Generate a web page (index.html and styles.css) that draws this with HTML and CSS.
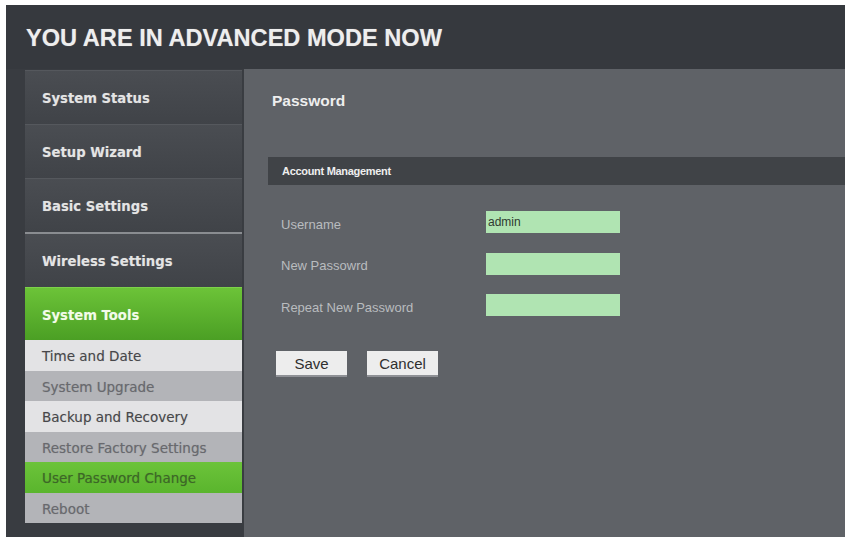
FILE: index.html
```html
<!DOCTYPE html>
<html lang="en">
<head>
    <meta charset="UTF-8">
    <title>Advanced Mode - Password</title>
    <link rel="stylesheet" href="styles.css">
</head>
<body>
    <div class="frame">
        <div class="header">
            <h1>YOU ARE IN ADVANCED MODE NOW</h1>
        </div>
        <div class="main">
            <div class="sidebar">
                <div class="nav-item">System Status</div>
                <div class="nav-item">Setup Wizard</div>
                <div class="nav-item">Basic Settings</div>
                <div class="nav-item wireless">Wireless Settings</div>
                <div class="nav-item active">System Tools</div>
                <div class="sub-item light">Time and Date</div>
                <div class="sub-item grey">System Upgrade</div>
                <div class="sub-item light">Backup and Recovery</div>
                <div class="sub-item grey">Restore Factory Settings</div>
                <div class="sub-item current">User Password Change</div>
                <div class="sub-item grey">Reboot</div>
            </div>
            <div class="content">
                <h2>Password</h2>
                <div class="section-bar">Account Management</div>
                <form class="pw-form">
                    <div class="row">
                        <label for="username">Username</label>
                        <input type="text" id="username" value="admin">
                    </div>
                    <div class="row">
                        <label for="new-pw">New Passowrd</label>
                        <input type="password" id="new-pw">
                    </div>
                    <div class="row">
                        <label for="repeat-pw">Repeat New Password</label>
                        <input type="password" id="repeat-pw">
                    </div>
                    <div class="buttons">
                        <button type="button">Save</button>
                        <button type="button">Cancel</button>
                    </div>
                </form>
            </div>
        </div>
    </div>
</body>
</html>
```

FILE: styles.css
```css
html, body {
    height: 100%;
}
body {
    margin: 0;
    padding: 5px 3px 0 6px;
    box-sizing: border-box;
    background-color: #ffffff;
    font-family: "Liberation Sans", Arial, sans-serif;
    overflow: hidden;
}
.frame {
    height: 100%;
    display: flex;
    flex-direction: column;
    background-color: #3a3d42;
}
.header {
    height: 64px;
    flex: none;
    background-color: #36393e;
    box-sizing: border-box;
    padding: 19px 0 0 20px;
}
.header h1 {
    margin: 0;
    font-size: 23.6px;
    line-height: 28px;
    font-weight: bold;
    color: #eeeeee;
    text-shadow: 0 0 1px rgba(255, 255, 255, 0.4);
}
.main {
    flex: 1;
    display: flex;
}
.sidebar {
    width: 237px;
    flex: none;
    box-sizing: border-box;
    padding: 1px 1px 0 19px;
    background-color: #393c41;
    font-family: "DejaVu Sans", Verdana, sans-serif;
}
.nav-item {
    height: 54px;
    box-sizing: border-box;
    padding: 20px 0 0 17px;
    font-size: 13.2px;
    font-weight: bold;
    color: #e4e4e4;
    background-image: linear-gradient(#4a4d52, #404348);
    border-top: 1px solid #55585d;
    text-shadow: 0 0 1px rgba(255, 255, 255, 0.3);
}
.nav-item.wireless {
    height: 55px;
    border-top: 2px solid #8a8d91;
}
.nav-item.active {
    height: 53px;
    color: #f2fbe9;
    border-top: 1px solid #7dd24a;
    background-image: linear-gradient(#6cc338, #4b9f24);
}
.sub-item {
    height: 30.5px;
    box-sizing: border-box;
    padding: 8px 0 0 17px;
    font-size: 13.5px;
    color: #47474a;
    text-shadow: 0 0 1px rgba(0, 0, 0, 0.2);
}
.sub-item.light {
    background-color: #e3e3e5;
}
.sub-item.grey {
    background-color: #b3b4b8;
    color: #68696e;
}
.sub-item.current {
    background-image: linear-gradient(#6cc33a, #5ab52d);
    color: #3d6628;
}
.content {
    flex: 1;
    background-color: #5f6267;
    margin-left: 1px;
    padding: 22px 0 0 24px;
}
.content h2 {
    margin: 0 0 0 4px;
    font-size: 15.5px;
    line-height: 20px;
    font-weight: bold;
    color: #eeeeee;
}
.section-bar {
    margin-top: 46px;
    height: 28px;
    line-height: 28px;
    padding-left: 14px;
    background-color: #404347;
    color: #eeeeee;
    font-size: 11px;
    font-weight: bold;
    letter-spacing: -0.3px;
}
.pw-form {
    padding: 26px 0 0 13px;
}
.row {
    display: flex;
    align-items: center;
    height: 22px;
    margin-bottom: 19.5px;
}
.row label {
    width: 205px;
    font-size: 13px;
    color: #b9bcbf;
    margin-top: 4px;
}
.row input {
    width: 134px;
    height: 22px;
    box-sizing: border-box;
    border: none;
    padding: 0 2px;
    background-color: #b0e4b2;
    font-family: "Liberation Sans", Arial, sans-serif;
    font-size: 12px;
    color: #2f3a30;
}
.buttons {
    display: flex;
    gap: 20px;
    margin: 35px 0 0 -5px;
}
.buttons button {
    width: 71px;
    height: 24px;
    border: none;
    background-color: #ededed;
    box-shadow: 0 2px 0 #8f9196;
    font-family: "Liberation Sans", Arial, sans-serif;
    font-size: 15px;
    color: #2f2f2f;
    padding: 0;
}
```
